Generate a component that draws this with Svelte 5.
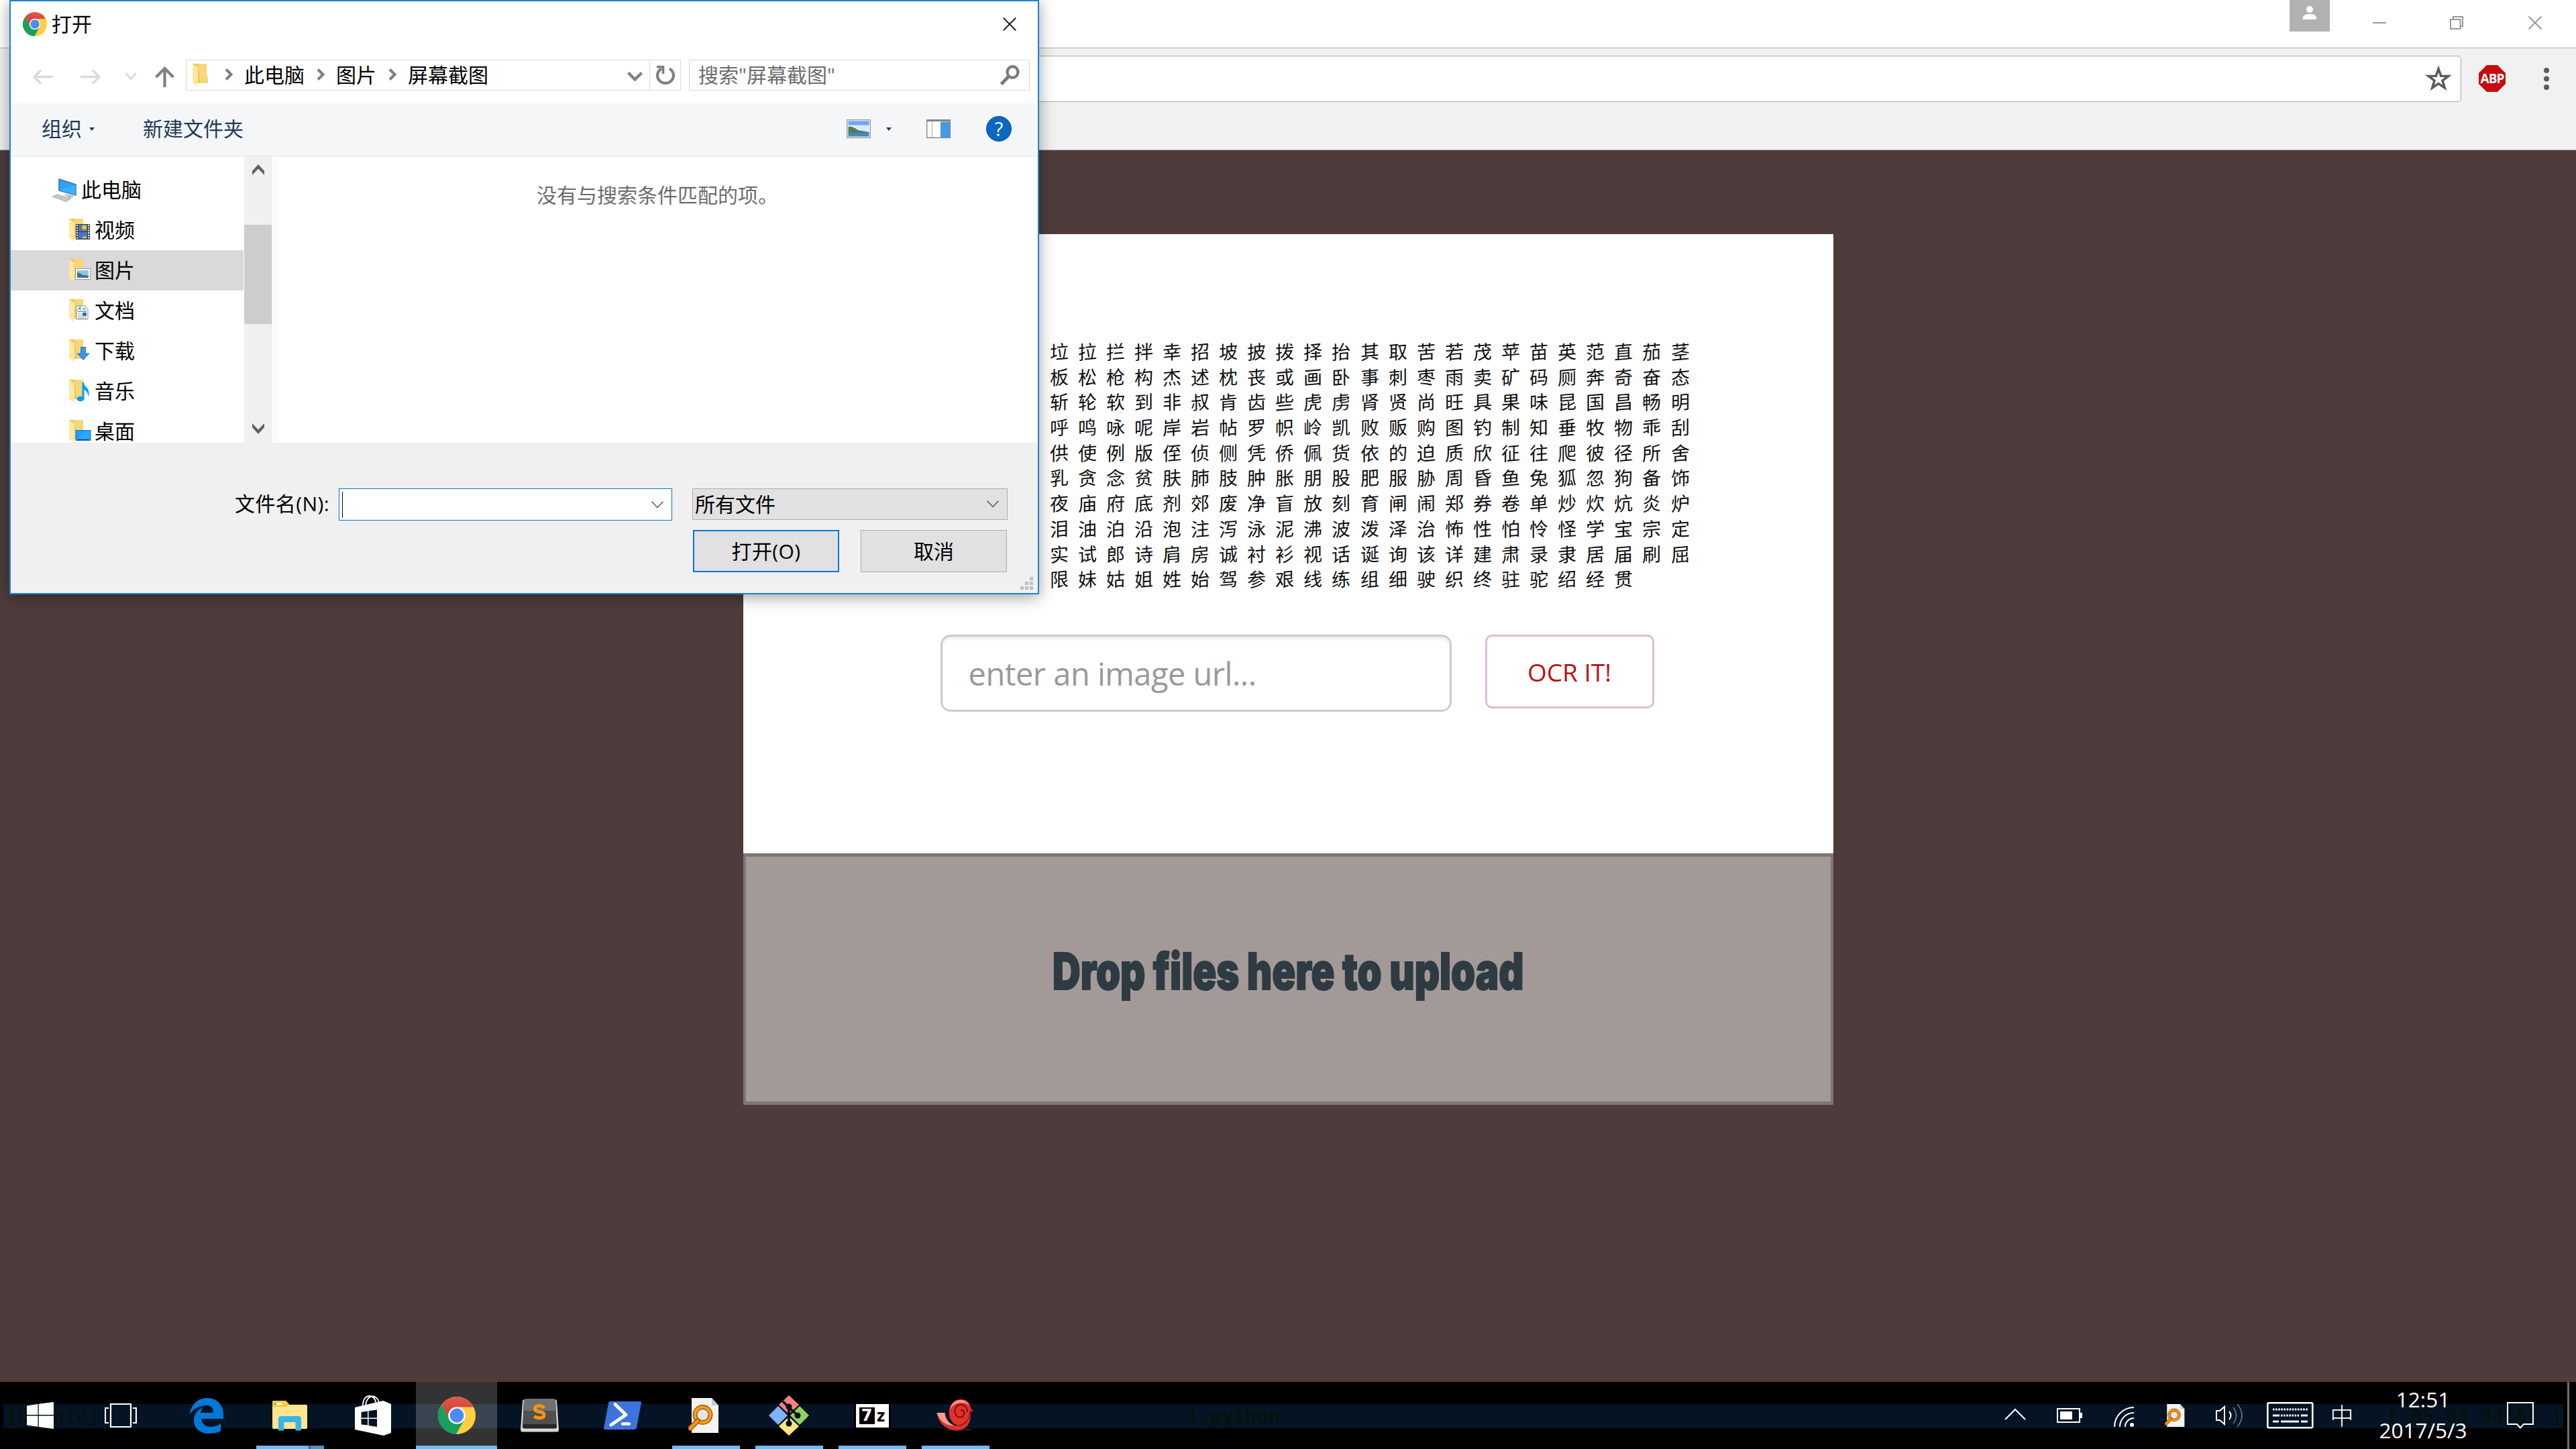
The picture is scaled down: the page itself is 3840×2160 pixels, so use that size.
<script>
  const glyphRows = [
    '垃拉拦拌幸招坡披拨择抬其取苦若茂苹苗英范直茄茎',
    '板松枪构杰述枕丧或画卧事刺枣雨卖矿码厕奔奇奋态',
    '斩轮软到非叔肯齿些虎虏肾贤尚旺具果味昆国昌畅明',
    '呼鸣咏呢岸岩帖罗帜岭凯败贩购图钓制知垂牧物乖刮',
    '供使例版侄侦侧凭侨佩货依的迫质欣征往爬彼径所舍',
    '乳贪念贫肤肺肢肿胀朋股肥服胁周昏鱼兔狐忽狗备饰',
    '夜庙府底剂郊废净盲放刻育闸闹郑券卷单炒炊炕炎炉',
    '泪油泊沿泡注泻泳泥沸波泼泽治怖性怕怜怪学宝宗定',
    '实试郎诗肩房诚衬衫视话诞询该详建肃录隶居届刷屈',
    '限妹姑姐姓始驾参艰线练组细驶织终驻驼绍经贯'
  ].map((row) => [...row]);

  const folders = [
    { name: '视频', kind: 'video' },
    { name: '图片', kind: 'picture', selected: true },
    { name: '文档', kind: 'doc' },
    { name: '下载', kind: 'download' },
    { name: '音乐', kind: 'music' },
    { name: '桌面', kind: 'desktop' }
  ];

  const crumbs = ['此电脑', '图片', '屏幕截图'];

  const apps = [
    { id: 'edge' },
    { id: 'explorer', stacked: true },
    { id: 'store' },
    { id: 'chrome', active: true },
    { id: 'sublime' },
    { id: 'powershell' },
    { id: 'search', running: true },
    { id: 'git', running: true },
    { id: 'sevenzip', running: true },
    { id: 'shell', running: true }
  ];
</script>

{#snippet chromeLogo(size)}
  <svg width={size} height={size} viewBox="0 0 48 48">
    <defs>
      <linearGradient id="cr-red" x1="0" y1="0" x2="0" y2="1"><stop offset="0" stop-color="#e2574c" /><stop offset="1" stop-color="#c8392c" /></linearGradient>
    </defs>
    <circle cx="24" cy="24" r="24" fill="#ffce42" />
    <path d="M4.5 10A24 24 0 0 1 45.3 13.2H24A11 11 0 0 0 14.5 29.5Z" fill="url(#cr-red)" />
    <path d="M4.5 10L14.5 29.5A11 11 0 0 0 33.5 29.5L23 48A24 24 0 0 1 4.5 10Z" fill="#17a05e" />
    <circle cx="24" cy="24" r="11" fill="#f4f4f4" />
    <circle cx="24" cy="24" r="8.9" fill="#4c8bf5" />
  </svg>
{/snippet}

{#snippet crumbArrow()}
  <svg class="crumb-arrow" width="13" height="18" viewBox="0 0 13 18"><path d="M2 1.5L9.5 9L2 16.5" fill="none" stroke="#7f7f7f" stroke-width="4" /></svg>
{/snippet}

{#snippet folderIcon(kind)}
  <svg class="folder" width="33" height="34" viewBox="0 0 33 34">
    <path d="M0 0H21V18L23 20V29H7Z" fill="#f7d779" />
    <path d="M0 0H8L12 29H7Z" fill="#eec766" />
    <path d="M0 0L8 6V24L7 34L0 28Z" fill="#ffe9a2" />
    {#if kind === 'video'}
      <rect x="10" y="8" width="21" height="23" fill="#3b3b3b" />
      <rect x="14" y="9" width="13" height="10" fill="#3f78d8" />
      <rect x="14" y="20" width="13" height="10" fill="#3f78d8" />
      <circle cx="22.500" cy="13" r="3.500" fill="#f2c51d" />
      <circle cx="17" cy="16" r="1.800" fill="#d8453a" />
      <path d="M20 29a3 3 0 0 1 6 0z" fill="#f2c51d" />
      <path d="M20.500 21h4l-2 4z" fill="#d8453a" />
      <path d="M12 9V31M29 9V31" stroke="#fff" stroke-width="2" stroke-dasharray="2 1.700" />
    {:else if kind === 'picture'}
      <rect x="9.500" y="14.500" width="22" height="16" fill="#fff" stroke="#9a9a9a" />
      <rect x="12" y="17" width="17" height="11" fill="#8fc3f5" />
      <path d="M12 20Q17 21 20 24L29 25V28H12Z" fill="#3d7a5d" />
      <rect x="12" y="26" width="17" height="2" fill="#3a6ea0" />
    {:else if kind === 'doc'}
      <path d="M11 10H24L28 14V30H11Z" fill="#fff" stroke="#8a8a8a" />
      <path d="M20 13.500h5M20 16h6M13 18.500h13" stroke="#1e8ad6" stroke-width="1.200" />
      <path d="M13 16.500L16.500 11.500V16.500" fill="none" stroke="#1e8ad6" stroke-width="1.200" />
      <path d="M13 21.500h6M13 24h6M13 26.500h13M13 28.500h13" stroke="#a6a6a6" stroke-width="1" />
      <rect x="20" y="20" width="6" height="5" fill="#35679e" />
    {:else if kind === 'download'}
      <path d="M17.500 11.500H24.500V21H30L21 30.500L12 21H17.500Z" fill="#3f97e8" stroke="#2577c4" />
    {:else if kind === 'music'}
      <ellipse cx="17" cy="28.500" rx="5.500" ry="3.800" fill="#0a9bf5" />
      <path d="M19.500 28V4H22C22 11 31 12 29.500 22L28 25C28.500 19 25 16 22.500 15V28Z" fill="#0a9bf5" />
    {:else if kind === 'desktop'}
      <rect x="10" y="15.500" width="22" height="15" fill="#18a0fb" stroke="#0f7fce" />
      <path d="M11 30L24 16H31V30Z" fill="#3db0ff" opacity=".5" />
      <path d="M12 29.500H30" stroke="#0c4f86" stroke-width="1.500" />
    {/if}
  </svg>
{/snippet}

{#snippet magnifierDoc(w, h)}
  <svg width={w} height={h} viewBox="0 0 46 52">
    <path d="M5 0H35L45 11V52H5Z" fill="#f3f3f2" />
    <path d="M35 0L45 11H35Z" fill="#c9c9c9" />
    <ellipse cx="21.500" cy="25" rx="11.500" ry="11.500" fill="#dfe6ec" stroke="#b85a08" stroke-width="7" />
    <ellipse cx="21.500" cy="25" rx="11.500" ry="11.500" fill="none" stroke="#f6a31a" stroke-width="3.600" />
    <path d="M14 34L3 45" stroke="#b85a08" stroke-width="7.500" stroke-linecap="round" />
    <path d="M14 34L3 45" stroke="#f39a1c" stroke-width="4" stroke-linecap="round" />
  </svg>
{/snippet}

<div class="screen">
  <header class="titlebar">
    <div class="user">
      <svg width="20" height="20" viewBox="0 0 20 20"><circle cx="10" cy="5" r="5" fill="#fff" /><path d="M0 20V16Q2 12 10 12T20 16V20Z" fill="#fff" /></svg>
    </div>
    <svg class="win-min" width="20" height="20" viewBox="0 0 20 20"><path d="M0 10H20" stroke="#999" stroke-width="2" /></svg>
    <svg class="win-max" width="20" height="20" viewBox="0 0 20 20"><path d="M1 5H15.500V19H1ZM5 5V1H19V15H15.500" fill="none" stroke="#999" stroke-width="2" /></svg>
    <svg class="win-close" width="20" height="20" viewBox="0 0 20 20"><path d="M.5 .5L19.500 19.500M19.500 .5L.5 19.500" stroke="#999" stroke-width="2" /></svg>
  </header>

  <div class="toolbar">
    <div class="omnibox">
      <svg width="38" height="37" viewBox="0 0 38 37"><path d="M19 4.500L22.700 15.200L34 15.400L25 22.200L28.300 33L19 26.600L9.700 33L13 22.200L4 15.400L15.300 15.200Z" fill="none" stroke="#5a5a5a" stroke-width="3.500" /></svg>
    </div>
    <div class="abp">
      <svg width="40" height="40" viewBox="0 0 40 40"><path d="M12 0H28L40 12V28L28 40H12L0 28V12Z" fill="#c70d0d" /></svg>
      <span>ABP</span>
    </div>
    <svg class="dots" width="8" height="34" viewBox="0 0 8 34"><circle cx="4" cy="4" r="4" fill="#5a5a5a" /><circle cx="4" cy="16.500" r="4" fill="#5a5a5a" /><circle cx="4" cy="29" r="4" fill="#5a5a5a" /></svg>
  </div>

  <main class="page">
    <section class="card">
      <div class="glyphs">
        {#each glyphRows as row}
          {#each row as ch}<span>{ch}</span>{/each}
        {/each}
      </div>
      <div class="form">
        <div class="url">enter an image url...</div>
        <div class="ocr">OCR IT!</div>
      </div>
    </section>
    <section class="dropzone"><span>Drop files here to upload</span></section>
  </main>

  <footer class="taskbar">
    <div class="band">
      <span class="ghost">[ubuntu]</span>
      <span class="ghost mid">1 python</span>
      <span class="ghost">[ 05-03 04:51 ]</span>
    </div>
    <div class="sys">
      <svg width="40" height="40" viewBox="0 0 40 40"><path d="M0 5.500L16.500 3V19H0ZM17.800 2.700L40 0V19H17.800ZM0 20.500H16.500V36.800L0 34.500ZM17.800 20.500H40V40L17.800 37Z" fill="#fff" /></svg>
    </div>
    <div class="sys view">
      <svg width="48" height="36" viewBox="0 0 48 36"><path d="M9 1H39V35H9ZM6 7H1V29H6M42 7H47V29H42" fill="none" stroke="#fff" stroke-width="2.200" /></svg>
    </div>
    {#each apps as app}
      <div class="app" class:active={app.active} class:running={app.running} class:shifted={app.id === 'search'}>
        {#if app.id === 'edge'}
          <svg width="50" height="53" viewBox="0 0 50 53"><path d="M0 24C2 9 12 0 26 0C42 0 50 12 50 25V31H17C18 39 24 43 31 43C37 43 42 41 46 38V49C41 52 35 53 29 53C15 53 6 45 6 33C6 24 12 17 20 14C17 17 16 20 16 22H35C35 15 32 11 25 11C15 11 5 16 0 24Z" fill="#0078d7" /></svg>
        {:else if app.id === 'explorer'}
          <svg width="52" height="45" viewBox="0 0 52 45"><path d="M0 2Q0 0 2 0H20L25 6H50Q52 6 52 8V40Q52 42 50 42H2Q0 42 0 40Z" fill="#ffe58f" /><path d="M0 2Q0 0 2 0H20L25 5L21 9H0Z" fill="#fbcb34" /><rect x="3" y="3.300" width="11" height="2.800" fill="#fff" /><rect x="3" y="3.300" width="3" height="2.800" fill="#39b5e6" /><path d="M9 44.500V27Q9 23 13 23H39Q43 23 43 27V44.500H34.500V32H17.500V44.500Z" fill="#39b5e6" /></svg>
        {:else if app.id === 'store'}
          <svg width="54" height="60" viewBox="0 0 54 60"><path d="M0 18L42 8L54 13V56L43 60L0 51Z" fill="#fff" /><path d="M11.500 18C11.500 5 17 1 21.500 1C26 1 30 4 31.500 11M16 17C16 7 21 2 25 1.500C30 1 34 5 36 10" fill="none" stroke="#fff" stroke-width="1.800" /><path d="M9.500 25L19 23.500V33.500H9.500ZM20.500 23.200L33 21.500V33.500H20.500ZM9.500 35H19V44.500L9.500 43.500ZM20.500 35H33V47L20.500 45Z" fill="#041424" /></svg>
        {:else if app.id === 'chrome'}
          {@render chromeLogo(56)}
        {:else if app.id === 'sublime'}
          <svg width="57" height="50" viewBox="0 0 57 50"><path d="M3 4Q3 1 7 1H50Q54 1 54 4L57 46Q57 49.500 54 49.500H3Q0 49.500 0 46Z" fill="#d6d6d6" /><path d="M5 3Q6 0 9 0H48Q51 0 52 3L54 42Q54 44.500 51 44.500H6Q3 44.500 3 42Z" fill="#272727" /><path d="M5 3Q6 0 9 0H48Q51 0 52 3L53.500 38H3.500Z" fill="#505050" /><path d="M5 3Q6 0 9 0H48Q51 0 52 3L52.800 18H4.500Z" fill="#707070" /><path d="M35 14C32 9.500 21 9 21.500 15.500C22 21 35 18 35 24C35 30.500 24 29.500 20.500 26" fill="none" stroke="#ff9216" stroke-width="5" /></svg>
        {:else if app.id === 'powershell'}
          <svg width="56" height="42" viewBox="0 0 56 42"><path d="M10 0H54Q56 0 56 2L49 39Q48 42 45 42H2Q0 42 0 40L7 3Q7 0 10 0Z" fill="#3c73dc" /><path d="M17 4.500L33 20L11 35" fill="none" stroke="#fff" stroke-width="5" stroke-linecap="round" stroke-linejoin="round" /><path d="M28 33.500H38" stroke="#fff" stroke-width="4.500" stroke-linecap="round" /></svg>
        {:else if app.id === 'search'}
          {@render magnifierDoc(46, 52)}
        {:else if app.id === 'git'}
          <svg width="60" height="60" viewBox="0 0 60 60"><path d="M30 0L45 14L30 28L15 14Z" fill="#ff7f7f" /><path d="M14 16L28 30L14 44L0 30Z" fill="#80b3ff" /><path d="M46 16L60 30L46 44L32 30Z" fill="#8dd35f" /><path d="M30 32L45 46L30 60L15 46Z" fill="#ffe680" /><path d="M30 42V18L21 9M30 18L43 30" fill="none" stroke="#000c14" stroke-width="3.500" /><circle cx="30" cy="17" r="4.500" fill="#000c14" /><circle cx="43" cy="30" r="4.500" fill="#000c14" /><circle cx="30" cy="42" r="4.500" fill="#000c14" /></svg>
        {:else if app.id === 'sevenzip'}
          <div class="seven"><b>7</b><i>z</i></div>
        {:else}
          <svg width="56" height="48" viewBox="0 0 56 48"><ellipse cx="33" cy="45" rx="20" ry="2.500" fill="#1d1d1d" /><path d="M0 20H13C14 34 24 41 33 39C23 37 18 28 19 17C20 7 27 0 36 0C45 0 50 5 51 13L55 18H50C53 33 46 46 30 46C13 46 3 34 0 20Z" fill="#e0322b" /><path d="M1 20H12C13 30 20 37 27 39C14 40 4 32 1 20ZM20 15C22 6 28 1 36 1C42 1 47 4 49 9C42 3 27 3 20 15Z" fill="#f59a92" /><path d="M46 19C46 11 41 8 36.500 8C30 8 26 14 28 21C30 28 39 29 41 22C42 17 38 15 36 17" fill="none" stroke="#7d0f0f" stroke-width="2" /><path d="M50 17C51 28 44 37 34 39" fill="none" stroke="#a31515" stroke-width="1.800" /></svg>
        {/if}
        {#if app.stacked}<div class="stack"><u></u><s></s></div>{/if}
      </div>
    {/each}
    <div class="tray">
      <div class="t1"><svg width="32" height="18" viewBox="0 0 32 18"><path d="M1 17L16 2L31 17" fill="none" stroke="#fff" stroke-width="2" /></svg></div>
      <div class="t2"><svg width="38" height="22" viewBox="0 0 38 22"><path d="M1 1H34V21H1Z" fill="none" stroke="#fff" stroke-width="2" /><rect x="5" y="5" width="18" height="12" fill="#fff" /><rect x="35" y="7" width="3" height="8" fill="#fff" /></svg></div>
      <div class="t3"><svg width="30" height="30" viewBox="0 0 30 30"><path d="M1 30A29 29 0 0 1 30 1M9 30A21 21 0 0 1 30 9M17 30A13 13 0 0 1 30 17" fill="none" stroke="#fff" stroke-width="2" /><circle cx="27" cy="27" r="3" fill="#fff" /></svg></div>
      <div class="t4">{@render magnifierDoc(30, 34)}</div>
      <div class="t5"><svg width="41" height="36" viewBox="0 0 41 36"><path d="M1 11H6L13 5V31L6 25H1Z" fill="none" stroke="#fff" stroke-width="2" /><path d="M20 12Q25 18 20 24" fill="none" stroke="#fff" stroke-width="2" /><path d="M26 6Q35 18 26 30M32 1Q46 18 32 35" fill="none" stroke="#62707c" stroke-width="1.800" /></svg></div>
      <div class="t6"><svg width="70" height="40" viewBox="0 0 70 40"><rect x="1.300" y="1.300" width="67" height="37" rx="2" fill="none" stroke="#fff" stroke-width="2.600" /><path d="M9 11H61M21 20H49" stroke="#fff" stroke-width="3" stroke-dasharray="2.600 1.500" /><path d="M9 20H19M51 20H61M9 29H18M21 29H48M51 29H61" stroke="#fff" stroke-width="3" /></svg></div>
      <div class="t7">中</div>
      <div class="t8"><span>12:51</span><span>2017/5/3</span></div>
      <div class="t9"><svg width="40" height="40" viewBox="0 0 40 40"><path d="M1 1H39V33H25L20 38.500L15 33H1Z" fill="none" stroke="#fff" stroke-width="2" /></svg></div>
      <div class="peek"></div>
    </div>
  </footer>

  <div class="dialog">
    <div class="d-title">
      {@render chromeLogo(36)}
      <span>打开</span>
      <svg class="d-close" width="20" height="20" viewBox="0 0 20 20"><path d="M.7 .7L19.300 19.300M19.300 .7L.7 19.300" stroke="#111" stroke-width="1.900" /></svg>
    </div>
    <div class="d-nav">
      <svg class="n-back" width="31" height="23" viewBox="0 0 31 23"><path d="M31 11.500H4M13 1.500L3 11.500L13 21.500" fill="none" stroke="#dcdcdc" stroke-width="3.600" /></svg>
      <svg class="n-fwd" width="31" height="23" viewBox="0 0 31 23"><path d="M0 11.500H27M18 1.500L28 11.500L18 21.500" fill="none" stroke="#dcdcdc" stroke-width="3.600" /></svg>
      <svg class="n-hist" width="18" height="12" viewBox="0 0 18 12"><path d="M1.500 1L9 9.500L16.500 1" fill="none" stroke="#dcdcdc" stroke-width="3" /></svg>
      <svg class="n-up" width="29" height="31" viewBox="0 0 29 31"><path d="M14.500 31V3M1.500 16L14.500 3L27.500 16" fill="none" stroke="#7f7f7f" stroke-width="4.200" /></svg>
      <div class="address">
        {@render folderIcon('plain')}
        {#each crumbs as crumb}
          {@render crumbArrow()}
          <span>{crumb}</span>
        {/each}
        <svg class="a-drop" width="23" height="15" viewBox="0 0 23 15"><path d="M1.500 1.500L11.500 11.500L21.500 1.500" fill="none" stroke="#7f7f7f" stroke-width="4.300" /></svg>
        <div class="refresh">
          <svg width="28" height="29" viewBox="0 0 28 29"><path d="M20 4.500A12 11.500 0 1 1 8 4.500" fill="none" stroke="#7f7f7f" stroke-width="4.200" /><path d="M1 1.800H10.500V12" fill="none" stroke="#7f7f7f" stroke-width="3.600" /></svg>
        </div>
      </div>
      <div class="search">
        <span>搜索"屏幕截图"</span>
        <svg width="29" height="30" viewBox="0 0 29 30"><ellipse cx="18.500" cy="10.500" rx="8" ry="8.300" fill="none" stroke="#7a7a7a" stroke-width="4.300" /><path d="M12.500 17L1.500 28.500" stroke="#7a7a7a" stroke-width="5" /></svg>
      </div>
    </div>
    <div class="d-tools">
      <span>组织</span>
      <div class="tri organize"></div>
      <span>新建文件夹</span>
      <svg class="thumb" width="36" height="28" viewBox="0 0 36 28"><rect x=".7" y=".7" width="34.600" height="26.600" fill="#fff" stroke="#9a9a9a" stroke-width="1.400" /><rect x="2.500" y="2.500" width="31" height="23" fill="#d9ebfc" /><rect x="2.500" y="2.500" width="31" height="6" fill="#6ba6f8" /><path d="M2.500 11Q10 10 17 16L33.500 19V21H2.500Z" fill="#4c7f5b" /><rect x="2.500" y="20" width="31" height="5.500" fill="#4a86b9" /></svg>
      <div class="tri view-tri"></div>
      <svg class="pane" width="36" height="28" viewBox="0 0 36 28"><rect x=".7" y=".7" width="34.600" height="26.600" fill="#fff" stroke="#858585" stroke-width="1.400" /><path d="M0 1.500H36" stroke="#858585" stroke-width="3" /><path d="M8.500 3V27" stroke="#aaa" /><rect x="21" y="3.500" width="14" height="23.500" fill="#429be3" /></svg>
      <div class="help">?</div>
    </div>
    <div class="d-body">
      <div class="tree">
        <div class="node root">
          <svg width="36" height="35" viewBox="0 0 36 35"><path d="M10 1L35 9V25L10 18Z" fill="#2ba3f2" stroke="#3c6e92" stroke-width="1.500" /><path d="M10 18L35 9V25Z" fill="#4fbdfb" opacity=".5" /><path d="M17 23L30 25L32 28L25 29Z" fill="#b4bcc2" /><path d="M0 27L7 24L28 30L20 34.500Z" fill="#c3c9ce" stroke="#98a1a8" stroke-width=".8" /></svg>
          <span>此电脑</span>
        </div>
        {#each folders as folder}
          <div class="node" class:selected={folder.selected}>
            {@render folderIcon(folder.kind)}
            <span>{folder.name}</span>
          </div>
        {/each}
      </div>
      <div class="scroll">
        <svg width="18" height="16" viewBox="0 0 18 16"><path d="M9 0L18 10V16L9 6.500L0 16V10Z" fill="#606060" /></svg>
        <div class="thumbbar"></div>
        <svg class="s-down" width="18" height="16" viewBox="0 0 18 16"><path d="M9 16L18 6V0L9 9.500L0 0V6Z" fill="#606060" /></svg>
      </div>
      <div class="split"></div>
      <div class="empty">没有与搜索条件匹配的项。</div>
    </div>
    <div class="d-foot">
      <div class="row">
        <span>文件名(N):</span>
        <div class="fname">
          <div class="caret"></div>
          <svg width="18" height="11" viewBox="0 0 18 11"><path d="M.7 .7L9 9.500L17.300 .7" fill="none" stroke="#505050" stroke-width="1.400" /></svg>
        </div>
        <div class="ftype">
          <span>所有文件</span>
          <svg width="18" height="11" viewBox="0 0 18 11"><path d="M.7 .7L9 9.500L17.300 .7" fill="none" stroke="#505050" stroke-width="1.400" /></svg>
        </div>
      </div>
      <div class="row buttons">
        <div class="btn primary">打开(O)</div>
        <div class="btn">取消</div>
      </div>
      <svg class="grip" width="19" height="19" viewBox="0 0 19 19"><path d="M14 0h5v5h-5zM7 7h5v5H7zM14 7h5v5h-5zM0 14h5v5H0zM7 14h5v5H7zM14 14h5v5h-5z" fill="#bfbfbf" /></svg>
    </div>
  </div>
</div>

<style>
  :global(body) { margin: 0; background: #4e3c3c; }
  .screen, .screen * { box-sizing: border-box; }
  .screen {
    position: relative;
    width: 3840px;
    height: 2160px;
    display: flex;
    flex-direction: column;
    overflow: hidden;
    background: #4e3c3c;
    font-family: "Open Sans", "Noto Sans CJK SC", sans-serif;
    font-size: 30px;
    line-height: 40px;
    color: #000;
  }
  svg { display: block; flex: none; }
  span { white-space: nowrap; }

  .titlebar { height: 72px; flex: none; background: #fff; border-bottom: 1px solid #b3b3b3; display: flex; justify-content: flex-end; align-items: flex-start; padding-right: 51px; }
  .user { width: 60px; height: 47px; background: #b2b2b2; display: flex; justify-content: center; padding-top: 9px; }
  .win-min, .win-max, .win-close { margin-top: 24px; }
  .win-min { margin-left: 64px; }
  .win-max { margin-left: 95px; }
  .win-close { margin-left: 97px; }

  .toolbar { height: 152px; flex: none; background: #f1f1f1; border-bottom: 1px solid #b0b0b0; display: flex; align-items: flex-start; padding: 11px 40px 0 0; }
  .omnibox { width: 3369px; margin-left: 300px; height: 69px; background: #fff; border: 1px solid #a9a9a9; border-radius: 6px; display: flex; justify-content: flex-end; padding: 14px 14px 0 0; }
  .abp { margin: 14px 0 0 26px; width: 40px; height: 40px; display: grid; place-items: center; }
  .abp > * { grid-area: 1 / 1; }
  .abp span { color: #fff; font-weight: 700; font-size: 19px; line-height: 40px; letter-spacing: -1px; }
  .dots { margin: 18px 0 0 57px; }

  .page { height: 1836px; flex: none; padding-top: 125px; display: flex; flex-direction: column; align-items: center; }
  .card { width: 1625px; height: 923px; background: #fff; padding: 157px 0 0 294px; }
  .glyphs { margin-left: 156px; display: grid; grid-template-columns: repeat(23, 42.1px); grid-auto-rows: 37.700px; font-family: "Noto Sans CJK SC", sans-serif; font-size: 28px; line-height: 35px; color: #111; text-align: center; }
  .glyphs span { transform: skewY(-5deg); }
  .form { margin-top: 63px; display: flex; align-items: flex-start; gap: 50px; }
  .url { width: 762px; height: 115px; border: 3px solid #ccc; border-radius: 15px; box-shadow: inset 0 3px 4px rgba(0, 0, 0, .09); color: #999; font-size: 47px; line-height: 110px; letter-spacing: -.5px; padding-left: 39px; }
  .ocr { width: 252px; height: 110px; border: 3px solid #d8bfd8; border-radius: 10px; color: #b71414; font-size: 37px; line-height: 105px; text-align: center; }
  .dropzone { width: 1625px; height: 375px; background: #a39a98; border: 5px solid #7f7574; border-width: 5px 4px; display: flex; justify-content: center; align-items: center; }
  .dropzone span { font-family: Inter, "Open Sans", sans-serif; font-weight: 900; font-size: 76px; line-height: 90px; color: #2f3b42; -webkit-text-stroke: 2px #2f3b42; transform: translateY(-13px) scaleX(.76); }

  .taskbar { position: relative; height: 100px; flex: none; background: #000; display: flex; align-items: stretch; }
  .band { position: absolute; left: 5px; right: 19px; top: 33px; height: 36px; background: #041424; display: flex; justify-content: space-between; padding: 0 1px 0 4px; }
  .ghost { font-family: "DejaVu Sans Mono", monospace; font-size: 29px; line-height: 36px; color: #031203; white-space: pre; }
  .mid { margin-left: 1620px; margin-right: auto; }
  .sys, .app { position: relative; flex: none; display: flex; align-items: center; justify-content: center; }
  .sys { width: 120px; }
  .view { margin-right: 6px; }
  .app { width: 124px; }
  .shifted { padding-right: 7px; }
  .active { width: 121px; margin: 0 1px 0 2px; background: linear-gradient(#333 33px, #3a4450 33px, #3a4450 69px, #333 69px); border-bottom: 5px solid #76b9ed; padding-top: 5px; }
  .running { background: linear-gradient(#76b9ed, #76b9ed) center bottom / 101px 5px no-repeat; }
  .stack { position: absolute; left: 12px; bottom: 0; display: flex; }
  .stack u { width: 78px; height: 5px; background: #76b9ed; border-right: 0; }
  .stack s { width: 23px; height: 5px; background: #5b8fb8; border-left: 3px solid #3f6480; }
  .seven { width: 49px; height: 35px; background: #fff; outline: 3px solid #000; display: flex; align-items: center; padding-left: 5px; gap: 3px; font-family: "DejaVu Sans", sans-serif; font-weight: 700; }
  .seven b { width: 23px; height: 25px; background: #000; color: #fff; font-size: 24px; line-height: 25px; text-align: center; }
  .seven i { font-style: normal; font-size: 25px; line-height: 25px; color: #000; width: 14px; transform: scaleX(.85); transform-origin: 0 50%; }

  .tray { position: relative; margin-left: auto; display: grid; grid-template-columns: 80px 82px 80px 72px 90px 92px 62px 180px 110px 28px; color: #fff; }
  .tray > div { display: flex; align-items: center; justify-content: center; }
  .t1 { padding-bottom: 4px; }
  .t3 { padding-top: 4px; }
  .tray .t7 { font-size: 35px; font-weight: 300; font-family: "Noto Sans CJK SC", sans-serif; padding-bottom: 3px; }
  .tray .t8 { flex-direction: column; font-size: 31.500px; line-height: 46px; padding-bottom: 3px; }
  .tray .peek { border-left: 3px solid #6e6e6e; margin-left: 15px; }

  .dialog { position: absolute; left: 14px; top: 0; width: 1535px; height: 886px; border: 2px solid #1883d7; background: #fff; box-shadow: 0 4px 22px rgba(0, 0, 0, .38); display: flex; flex-direction: column; }
  .d-title { height: 68px; display: flex; align-items: center; gap: 7px; padding: 0 32px 0 18px; }
  .d-close { margin-left: auto; }
  .d-nav { height: 84px; display: flex; align-items: center; padding-left: 32px; }
  .n-back { margin-top: 4px; }
  .n-fwd { margin: 4px 0 0 41px; }
  .n-hist { margin: 3px 0 0 35px; }
  .n-up { margin: 4px 0 0 27px; }
  .address { margin-left: 17px; width: 738px; height: 46px; border: 1px solid #d9d9d9; display: flex; align-items: center; padding-left: 9px; }
  .address .folder { margin-right: -3px; }
  .crumb-arrow { margin: 0 16px 0 18px; position: relative; top: -1px; }
  .a-drop { margin: 4px 10px 0 auto; }
  .refresh { width: 46px; height: 44px; border-left: 1px solid #d9d9d9; display: flex; align-items: center; justify-content: center; }
  .search { margin-left: 12px; width: 508px; height: 46px; border: 1px solid #d9d9d9; display: flex; align-items: center; justify-content: space-between; padding: 0 14px 0 13px; color: #6d6d6d; }
  .d-tools { height: 79px; background: #f4f6f8; border-bottom: 1px solid #e3e7eb; display: flex; align-items: center; padding: 0 39px 2px 46px; color: #1e395b; }
  .tri { border: 4px solid transparent; border-top: 5px solid #1e395b; border-bottom: 0; width: 8px; height: 5px; }
  .organize { margin: 0 72px 0 11px; }
  .thumb { margin-left: auto; }
  .view-tri { margin: 0 52px 0 23px; }
  .help { margin-left: 53px; width: 38px; height: 38px; border-radius: 50%; background: #0868c4; border: 1px solid #0a4a8c; color: #fff; font-size: 29px; line-height: 36px; text-align: center; }
  .d-body { height: 427px; display: flex; }
  .tree { width: 348px; padding: 20px 1px 0 0; overflow: hidden; }
  .node { height: 60px; display: flex; align-items: center; gap: 5px; padding-left: 87px; }
  .node.root { padding-left: 62px; gap: 7px; }
  .selected { background: #d9d9d9; }
  .scroll { width: 42px; background: #f0f0f0; display: flex; flex-direction: column; align-items: center; padding: 12px 1px 13px 0; }
  .thumbbar { margin-top: 74px; width: 41px; height: 148px; background: #cdcdcd; }
  .s-down { margin-top: auto; }
  .split { width: 3px; margin: 0 0 0 3px; background: #f7f7f7; }
  .empty { flex: 1; padding: 38px 0 0 388px; color: #6d6d6d; }
  .d-foot { position: relative; flex: 1; background: #f0f0f0; padding: 68px 45px 0 0; }
  .row { display: flex; justify-content: flex-end; align-items: flex-start; }
  .row > span { line-height: 46px; margin-right: 14px; letter-spacing: .4px; }
  .fname { width: 497px; height: 48px; background: #fff; border: 1px solid #0078d7; display: flex; align-items: center; justify-content: space-between; padding: 0 12px 0 4px; }
  .caret { width: 1px; height: 39px; background: #000; }
  .ftype { margin-left: 30px; width: 470px; height: 47px; background: #e1e1e1; border: 1px solid #adadad; display: flex; align-items: center; justify-content: space-between; padding: 0 12px 0 3px; }
  .buttons { margin-top: 14px; padding-right: 1px; gap: 32px; }
  .btn { width: 218px; height: 63px; background: #e1e1e1; border: 1px solid #adadad; line-height: 62px; text-align: center; }
  .primary { border: 2px solid #0078d7; line-height: 60px; letter-spacing: .4px; }
  .grip { position: absolute; right: 7px; bottom: 5px; }
</style>
